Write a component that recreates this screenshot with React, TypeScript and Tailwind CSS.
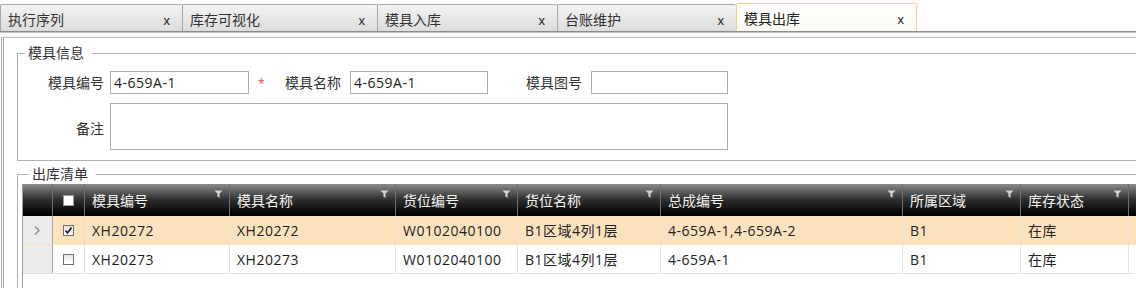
import React from "react";

const tabs = [
  { label: "执行序列", w: "w-[182px]" },
  { label: "库存可视化", w: "w-[195px]" },
  { label: "模具入库", w: "w-[180px]" },
  { label: "台账维护", w: "w-[179px]" },
  { label: "模具出库", w: "w-[181px]", active: true },
];

const columns = [
  { title: "模具编号", w: "w-[145px]" },
  { title: "模具名称", w: "w-[166px]" },
  { title: "货位编号", w: "w-[122px]" },
  { title: "货位名称", w: "w-[143px]" },
  { title: "总成编号", w: "w-[242px]" },
  { title: "所属区域", w: "w-[118px]" },
  { title: "库存状态", w: "w-[108px]" },
];

const rows = [
  { checked: true, current: true, cells: ["XH20272", "XH20272", "W0102040100", "B1区域4列1层", "4-659A-1,4-659A-2", "B1", "在库"] },
  { checked: false, current: false, cells: ["XH20273", "XH20273", "W0102040100", "B1区域4列1层", "4-659A-1", "B1", "在库"] },
];

function FilterIcon() {
  return (
    <svg width="9" height="8" viewBox="0 0 9 8" className="shrink-0">
      <path d="M0.5 0.5 H8.5 L5.5 3.5 V7.5 L3.5 6.5 V3.5 Z" fill="#d6d6d6" stroke="#9a9a9a" strokeWidth="0.5" />
    </svg>
  );
}

function CheckBox({ checked, header }: { checked?: boolean; header?: boolean }) {
  return (
    <div
      className={
        header
          ? "w-[11px] h-[11px] bg-white border border-[#9a9a9a]"
          : "w-[11px] h-[11px] bg-linear-to-b from-[#e6e6e6] to-[#ffffff] border border-[#707070] flex items-center justify-center"
      }
    >
      {checked && (
        <svg width="9" height="9" viewBox="0 0 9 9">
          <path d="M1.5 4.5 L3.5 7 L7.5 1.5" fill="none" stroke="#1a1a1a" strokeWidth="1.6" />
        </svg>
      )}
    </div>
  );
}

export default function App() {
  return (
    <div className="w-[1136px] h-[288px] overflow-hidden bg-white flex flex-col font-['Open_Sans','Noto_Sans_CJK_SC',sans-serif] text-[14px] text-[#222]">
      {/* tab strip */}
      <div className="flex items-end h-[31px] shrink-0">
        {tabs.map((t) =>
          t.active ? (
            <div
              key={t.label}
              className={`${t.w} h-[28px] flex items-center justify-between pl-[7px] pr-[12px] pt-[2px] bg-linear-to-b from-[#ffffff] to-[#fbfbf3] border border-b-0 border-[#ecd58a] rounded-t-[2px]`}
            >
              <span className="text-[#222]">{t.label}</span>
              <span className="text-[13px] text-[#222] font-['Liberation_Sans',sans-serif] mt-[3px]">x</span>
            </div>
          ) : (
            <div
              key={t.label}
              className={`${t.w} h-[27px] flex items-center justify-between pl-[7px] pr-[12px] pt-[2px] bg-linear-to-b from-[#f4f4f4] to-[#dcdcdc] border border-b-0 border-r-0 border-[#a8a8a8] rounded-t-[2px]`}
            >
              <span className="text-[#333]">{t.label}</span>
              <span className="text-[13px] text-[#222] font-['Liberation_Sans',sans-serif] mt-[3px]">x</span>
            </div>
          )
        )}
      </div>
      <div className="h-px bg-[#8c8c8c] shrink-0" />
      <div className="h-px bg-[#c4c4c4] shrink-0" />
      <div className="h-[4px] bg-[#f8f8f8] shrink-0" />

      {/* content panel */}
      <div className="flex-1 ml-px border-l-[3px] border-double border-[#a4a4a4] border-t border-t-[#bdbdbd] pl-[13px] pt-[5px]">
        {/* 模具信息 */}
        <fieldset className="border-t border-l border-b border-[#b0b0b0] pb-[10px]">
          <legend className="ml-[7px] pl-[3px] pr-[8px] leading-[20px] text-[#333]">模具信息</legend>
          <div className="flex items-center mt-[8px]">
            <div className="w-[86px] text-right text-[#333] whitespace-nowrap">模具编号</div>
            <div className="ml-[6px] w-[139px] h-[23px] border border-[#acacac] flex items-center pl-[3px] tracking-[0.5px]">4-659A-1</div>
            <div className="w-[36px] pl-[9px] text-[#e04848] text-[12px] pt-[2px]">*</div>
            <div className="w-[56px] text-right text-[#333] whitespace-nowrap">模具名称</div>
            <div className="ml-[9px] w-[138px] h-[23px] border border-[#acacac] flex items-center pl-[3px] tracking-[0.5px]">4-659A-1</div>
            <div className="ml-[37px] w-[57px] text-right text-[#333] whitespace-nowrap">模具图号</div>
            <div className="ml-[9px] w-[137px] h-[23px] border border-[#acacac]" />
          </div>
          <div className="flex items-center mt-[9px]">
            <div className="w-[86px] text-right text-[#333] pt-[4px]">备注</div>
            <div className="ml-[6px] w-[618px] h-[47px] border border-[#acacac]" />
          </div>
        </fieldset>

        {/* 出库清单 */}
        <fieldset className="mt-[3px] border-t border-l border-[#b0b0b0] pl-[4px] h-[200px]">
          <legend className="ml-[7px] pl-[3px] pr-[8px] leading-[20px] text-[#333]">出库清单</legend>
          <div className="border-l border-[#9a9a9a] h-full">
            {/* header */}
            <div className="flex h-[32px] bg-linear-to-b from-[#8c8c8c] via-[#2e2e2e] to-[#020202] text-[#f4f4f4]">
              <div className="w-[30px] shrink-0 border-r border-[#6c6c6c]" />
              <div className="w-[32px] shrink-0 border-r border-[#6c6c6c] flex items-center justify-center">
                <CheckBox header />
              </div>
              {columns.map((c) => (
                <div key={c.title} className={`${c.w} shrink-0 border-r border-[#6c6c6c] flex justify-between pl-[7px]`}>
                  <span className="self-center">{c.title}</span>
                  <div className="mt-[6px] mr-[6px]">
                    <FilterIcon />
                  </div>
                </div>
              ))}
              <div className="flex-1" />
            </div>

            {/* rows */}
            {rows.map((r, i) => (
              <div
                key={i}
                className={
                  r.current
                    ? "flex h-[29px] bg-[#fde3bd] border-b border-[#f6e2b4]"
                    : "flex h-[29px] bg-white border-b border-[#e2e2e2]"
                }
              >
                <div className="w-[30px] shrink-0 bg-[#ececec] border-r border-[#a6a6a6] flex items-center pl-[11px]">
                  {r.current && (
                    <svg width="6" height="9" viewBox="0 0 6 9">
                      <path d="M1 0.5 L5 4.5 L1 8.5" fill="none" stroke="#8a8a8a" strokeWidth="1.3" />
                    </svg>
                  )}
                </div>
                <div className="w-[32px] shrink-0 border-r border-[#dedede] flex items-center justify-center">
                  <CheckBox checked={r.checked} />
                </div>
                {columns.map((c, j) => (
                  <div key={j} className={`${c.w} shrink-0 border-r border-[#e2e2e2] flex items-center pl-[7px] whitespace-nowrap tracking-[0.5px]`}>
                    {r.cells[j]}
                  </div>
                ))}
                <div className="flex-1" />
              </div>
            ))}
          </div>
        </fieldset>
      </div>
    </div>
  );
}
